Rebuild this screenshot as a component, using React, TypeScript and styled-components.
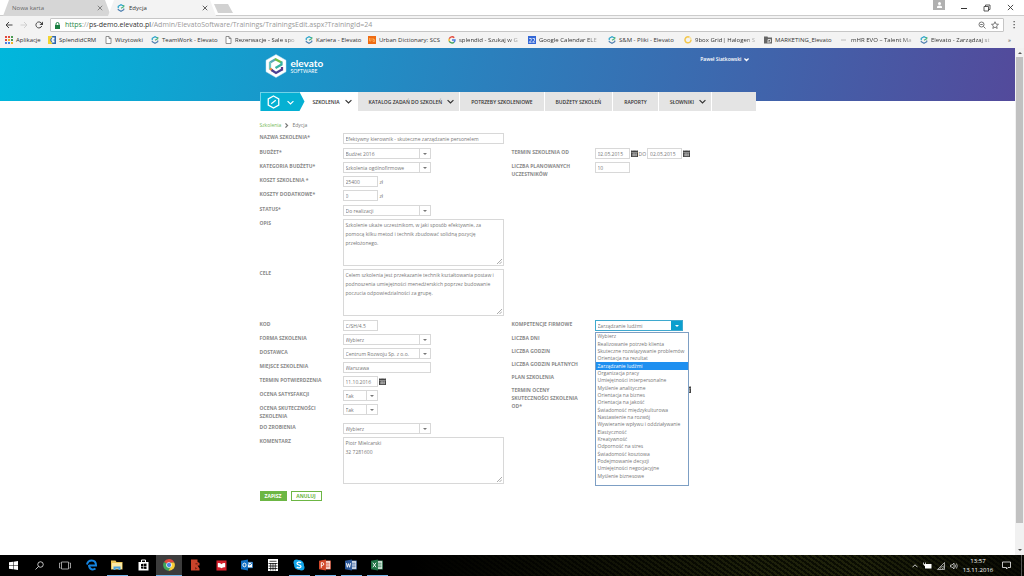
import React, { useId } from "react";
import styled, { createGlobalStyle, css } from "styled-components";

const Global = createGlobalStyle`
  *, *::before, *::after { box-sizing: border-box; }
  body { margin: 0; background: #fff; font-family: "Open Sans", "Noto Sans", sans-serif; font-size: 5px; color: #777; }
  input, select, textarea, button { font: inherit; color: inherit; margin: 0; }
  a { color: inherit; text-decoration: none; }
  ul { list-style: none; margin: 0; padding: 0; }
  svg { display: block; flex: none; }
`;

const Desktop = styled.div`
  min-height: 100vh;
  display: flex;
  flex-direction: column;
`;

/* ---------- browser window ---------- */

const TabStrip = styled.div`
  height: 16px;
  display: flex;
  align-items: flex-end;
  padding-left: 3px;
  background: #fff;
  border-bottom: 1px solid #ccc;
`;

const Tab = styled.div<{ $active?: boolean }>`
  width: 108px;
  height: 16px;
  margin: 0 -3px -1px 0;
  padding: 0 8px 0 9px;
  display: flex;
  align-items: center;
  gap: 4px;
  font-size: 6px;
  color: ${(p) => (p.$active ? "#333" : "#666")};
  background: ${(p) => (p.$active ? "#f3f3f3" : "#d6d6d6")};
  clip-path: polygon(6px 0, calc(100% - 6px) 0, 100% 100%, 0 100%);
`;

const TabTitle = styled.span`
  flex: 1;
  white-space: nowrap;
`;

const PlainButton = styled.button`
  border: 0;
  padding: 0;
  background: none;
  display: flex;
  align-items: center;
  justify-content: center;
  gap: 4px;
`;

const NewTab = styled.button`
  width: 19px;
  height: 9px;
  margin: 0 0 2px 1px;
  border: 0;
  padding: 0;
  background: #d2d2d2;
  clip-path: polygon(0 0, 14px 0, 100% 100%, 4px 100%);
`;

const WindowControls = styled.div`
  align-self: stretch;
  margin-left: auto;
  padding-right: 10px;
  display: flex;
  align-items: center;
  gap: 16px;
  color: #333;
`;

const Profile = styled.span`
  align-self: flex-start;
  width: 12px;
  height: 10px;
  display: flex;
  justify-content: center;
  align-items: center;
  background: #b0b0b0;
`;

const Toolbar = styled.div`
  height: 18px;
  display: flex;
  align-items: center;
  gap: 7px;
  padding: 0 7px 0 5px;
  background: #f3f3f3;
`;

const Omnibox = styled.div`
  flex: 1;
  height: 14px;
  display: flex;
  align-items: center;
  gap: 5px;
  padding: 0 4px;
  border: 1px solid #c6c6c6;
  border-radius: 1px;
  background: #fff;
`;

const Url = styled.span`
  flex: 1;
  font-size: 7px;
  line-height: 10px;
  color: #999;
  white-space: nowrap;
  b { font-weight: 400; color: #333; }
  i { font-style: normal; color: #2b8a4b; }
`;

const Bookmarks = styled.nav`
  height: 14px;
  display: flex;
  align-items: center;
  padding: 0 13px 2px 5px;
  background: #f3f3f3;
  color: #333;
  font-size: 6px;
`;

const Bookmark = styled.a<{ $width: number; $fade?: boolean }>`
  width: ${(p) => p.$width}px;
  display: flex;
  align-items: center;
  gap: 3px;
  white-space: nowrap;
  line-height: 10px;
  ${(p) =>
    p.$fade &&
    css`
      span { mask-image: linear-gradient(90deg, #000 calc(100% - 10px), #0004); }
    `}
`;

const More = styled.span`
  margin-left: auto;
`;

const Viewport = styled.div`
  flex: 1;
  display: flex;
`;

const ScrollBar = styled.div`
  width: 9px;
  display: flex;
  flex-direction: column;
  align-items: center;
  padding: 4px 0;
  color: #555;
  background: #f1f1f1;
`;

const Thumb = styled.div`
  flex: 1;
  width: 7px;
  margin: 3px 0 26px;
  background: #c1c1c1;
`;

/* ---------- site ---------- */

const Page = styled.div`
  flex: 1;
  background: linear-gradient(100deg, #00b7dc 0%, #2b80bd 48%, #534a9b 100%) top / 100% 53px no-repeat #fff;
`;

const Container = styled.div`
  max-width: 496px;
  margin: 0 auto;
`;

const Masthead = styled.header`
  height: 44px;
  padding: 6px 7px 0 5px;
  display: flex;
  align-items: flex-start;
  gap: 4px;
  color: #fff;
`;

const Brand = styled.div`
  flex: 1;
  padding-top: 4px;
  font-family: Lato, sans-serif;
  font-size: 5px;
  line-height: 6px;
  strong { display: block; font-size: 10px; line-height: 10px; }
`;

const UserMenu = styled(PlainButton)`
  font-weight: 600;
  line-height: 10px;
  gap: 2px;
`;

const Nav = styled.nav`
  height: 19px;
  display: flex;
  gap: 1px;
  background: #fff;
`;

const HomeButton = styled.button`
  width: 45px;
  border: 1px solid #6fd3e8;
  border-width: 1px 0 0 1px;
  padding: 0 11px 0 6px;
  display: flex;
  align-items: center;
  justify-content: space-between;
  color: #fff;
  background: #05b0d3;
  clip-path: polygon(0 0, calc(100% - 5px) 0, 100% 50%, calc(100% - 5px) 100%, 0 100%);
`;

const NavItem = styled.a<{ $active?: boolean; $menu?: boolean }>`
  padding: 0 ${(p) => (p.$menu ? 5 : 11)}px 0 ${(p) => (p.$active ? 7 : 11)}px;
  display: flex;
  align-items: center;
  gap: 5px;
  font-weight: 600;
  white-space: nowrap;
  color: #333;
  background: ${(p) => (p.$active ? "#fff" : "#e4e4e4")};
`;

const NavRest = styled.div`
  flex: 1;
  background: #e4e4e4;
`;

const Crumbs = styled.nav`
  display: flex;
  align-items: center;
  gap: 3px;
  padding: 9px 0 3px;
  line-height: 10px;
  a { color: #76b95a; }
`;

const Form = styled.form`
  display: flex;
  flex-direction: column;
  gap: 4px;
`;

const Section = styled.div`
  display: grid;
  grid-template-columns: 252px 1fr;
`;

const Stack = styled.div`
  display: flex;
  flex-direction: column;
  gap: 3px;
`;

const Row = styled.div<{ $bare?: boolean }>`
  min-height: ${(p) => (p.$bare ? 10 : 11)}px;
  display: grid;
  grid-template-columns: 83px 1fr;
  align-items: start;
`;

const Label = styled.label`
  padding-right: 6px;
  font-weight: 700;
  line-height: 8px;
  color: #8a8a8a;
`;

const Controls = styled.div`
  position: relative;
  display: flex;
  align-items: center;
  gap: 1px;
`;

const Unit = styled.span`
  padding-left: 1px;
`;

const sizes = { s: "35px", m: "88px", l: "161px" };
type Size = keyof typeof sizes;

const Input = styled.input<{ $size: Size }>`
  width: ${(p) => sizes[p.$size]};
  height: 11px;
  padding: 0 2px;
  border: 1px solid #d8d8d8;
  background: #fff;
  outline: 0;
`;

const Area = styled.textarea`
  width: ${sizes.l};
  height: 47px;
  display: block;
  padding: 1px 2px;
  border: 1px solid #d8d8d8;
  line-height: 9px;
  resize: none;
  outline: 0;
`;

const AreaBox = styled.div`
  position: relative;
  justify-self: start;
  svg { position: absolute; right: 2px; bottom: 2px; }
`;

const SelectBox = styled.div<{ $size: Size; $open?: boolean }>`
  width: ${(p) => sizes[p.$size]};
  height: 11px;
  display: flex;
  border: 1px solid ${(p) => (p.$open ? "#3fa9cf" : "#d8d8d8")};
  select {
    flex: 1;
    min-width: 0;
    border: 0;
    padding: 0 2px;
    appearance: none;
    background: #fff;
    outline: 0;
  }
`;

const Arrow = styled.span<{ $open?: boolean }>`
  width: 11px;
  display: flex;
  align-items: center;
  justify-content: center;
  color: ${(p) => (p.$open ? "#fff" : "#777")};
  background: ${(p) => (p.$open ? "#0b9fce" : "#fff")};
  border-left: 1px solid ${(p) => (p.$open ? "#0b9fce" : "#d8d8d8")};
`;

const Options = styled.ul`
  position: absolute;
  z-index: 1;
  top: 12px;
  left: 0;
  width: 94px;
  height: 154px;
  padding-bottom: 5px;
  display: flex;
  flex-direction: column;
  border: 1px solid #7d9fc4;
  background: #fff;
`;

const Option = styled.li<{ $selected: boolean }>`
  flex: 1;
  display: flex;
  align-items: center;
  padding-left: 2px;
  white-space: nowrap;
  line-height: 7px;
  color: ${(p) => (p.$selected ? "#fff" : "#777")};
  background: ${(p) => (p.$selected ? "#1e8ff0" : "transparent")};
`;

const PushRight = styled.span`
  margin-left: 89px;
`;

const Actions = styled.div`
  display: flex;
  gap: 4px;
  padding: 3px 0 12px;
`;

const Action = styled.button<{ $primary?: boolean }>`
  width: ${(p) => (p.$primary ? 27 : 31)}px;
  height: 10px;
  padding: 0;
  border: 1px solid #6cb644;
  font-weight: 700;
  line-height: 8px;
  color: ${(p) => (p.$primary ? "#fff" : "#6cb644")};
  background: ${(p) => (p.$primary ? "#6cb644" : "#fff")};
`;

/* ---------- taskbar ---------- */

const Taskbar = styled.footer`
  height: 21px;
  display: flex;
  background:
    linear-gradient(90deg, #000 40%, transparent 75%, transparent 85%, #000a 100%),
    repeating-linear-gradient(35deg, #0b0d03 0 2px, #1e210a 2px 4px);
  color: #fff;
`;

const TaskButton = styled.button<{ $running?: boolean; $current?: boolean }>`
  width: 26px;
  border: 0;
  padding: 0 0 1px;
  display: flex;
  align-items: center;
  justify-content: center;
  background:
    linear-gradient(${(p) => (p.$running ? "#76b9ed, #76b9ed" : "transparent, transparent")}) bottom / ${(p) => (p.$current ? 26 : 21)}px 1px no-repeat
    ${(p) => (p.$current ? "#3c3c3c" : "transparent")};
`;

const Tray = styled.div`
  margin-left: auto;
  padding-right: 2px;
  display: flex;
  align-items: center;
  gap: 5px;
`;

const Clock = styled.time`
  width: 34px;
  padding-right: 4px;
  display: flex;
  flex-direction: column;
  align-items: center;
  font-size: 6px;
  line-height: 9px;
  white-space: nowrap;
`;

const ShowDesktop = styled.span`
  height: 21px;
  margin-left: 5px;
  border-left: 1px solid #555;
`;

/* ---------- drawings ---------- */

const Chevron = ({ size = 6, dir = "down", width = 2 }: { size?: number; dir?: "down" | "up" | "right"; width?: number }) => (
  <svg width={size} height={size} viewBox="0 0 12 12" fill="none" stroke="currentColor" strokeWidth={width}>
    <path d={dir === "down" ? "M1 3.5l5 5 5-5" : dir === "up" ? "M1 8.5l5-5 5 5" : "M3.5 1l5 5-5 5"} />
  </svg>
);

const Caret = ({ up }: { up?: boolean }) => (
  <svg width="4" height="2" viewBox="0 0 4 2" fill="currentColor">
    <path d={up ? "M0 2h4L2 0z" : "M0 0h4L2 2z"} />
  </svg>
);

const Close = ({ size }: { size: number }) => (
  <svg width={size} height={size} viewBox="0 0 8 8" stroke="currentColor" strokeWidth="1">
    <path d="M1 1l6 6M7 1L1 7" />
  </svg>
);

const Calendar = () => (
  <svg width="7" height="7" viewBox="0 0 14 14">
    <path fill="#444" d="M0 1h14v13H0z" />
    <path stroke="#ddd" strokeWidth="1" d="M1 5h12M2 8.500h10M2 11.500h10M4.500 6v6M7.500 6v6M10.500 6v6M3.500 0v2M10.500 0v2" />
  </svg>
);

const Swirl = () => (
  <svg width="8" height="8" viewBox="0 0 16 16" fill="none" strokeWidth="2.4">
    <path stroke="#29a3c9" d="M13 4L8 1.5 2.5 4.5v4" />
    <path stroke="#4f7fb0" d="M2.5 10v1.5L8 14.5l5.5-3V9" />
    <path stroke="#4cb67a" d="M8 8.5l5.5-3.2V2" />
  </svg>
);

const FileIcon = () => (
  <svg width="7" height="8" viewBox="0 0 14 16" fill="#fff" stroke="#777" strokeWidth="1.6">
    <path d="M2 1h6l4 4v10H2zM8 1v4h4" />
  </svg>
);

const icons: Record<string, React.ReactNode> = {
  apps: (
    <svg width="8" height="8" viewBox="0 0 8 8">
      {["#e2483c", "#e2483c", "#4b9b52", "#e2483c", "#f0b429", "#4b9b52", "#4a7de0", "#4a7de0", "#f0b429"].map((c, i) => (
        <rect key={i} x={(i % 3) * 3} y={Math.floor(i / 3) * 3} width="2" height="2" fill={c} />
      ))}
    </svg>
  ),
  crm: (
    <svg width="8" height="8" viewBox="0 0 16 16">
      <path fill="#2f66ad" d="M0 0h16v16H0z" />
      <path fill="#f2d433" d="M0 0h9l-5 8 5 8H0z" />
      <path fill="#fff" d="M6 3h7v4l-4 1 4 1v4H6l3-3-4-2 4-2z" />
    </svg>
  ),
  file: <FileIcon />,
  swirl: <Swirl />,
  urban: (
    <svg width="8" height="8" viewBox="0 0 16 16">
      <path fill="#ef6b12" d="M0 0h16v16H0z" />
      <path fill="none" stroke="#ffb25c" strokeWidth="1.6" d="M3 4v6h3V4M10 4v7h3V7h-3" />
    </svg>
  ),
  google: (
    <svg width="8" height="8" viewBox="0 0 16 16" fill="none" strokeWidth="2.8">
      <path stroke="#e2483c" d="M12.5 3.5A6 6 0 0 0 2.6 5.5" />
      <path stroke="#f0b429" d="M2.6 5.5a6 6 0 0 0 0 5" />
      <path stroke="#3fa15a" d="M2.6 10.5a6 6 0 0 0 9.4 2" />
      <path stroke="#4a7de0" d="M12 12.5A6 6 0 0 0 14 8H8" />
    </svg>
  ),
  gcal: (
    <svg width="8" height="8" viewBox="0 0 16 16">
      <path fill="#3367d6" d="M0 0h16v16H0z" />
      <path fill="none" stroke="#fff" strokeWidth="1.5" d="M2.500 5h4v3.500l-4 4h4.500M9 5h4v3.500l-4 4h4.500" />
    </svg>
  ),
  ring: (
    <svg width="8" height="8" viewBox="0 0 16 16" fill="none" stroke="#f3c74d" strokeWidth="3">
      <path d="M11 2.5A6 6 0 1 0 14 8" />
      <path stroke="#f8e2a0" d="M11 2.5A6 6 0 0 1 14 8" />
    </svg>
  ),
  folder: (
    <svg width="8" height="8" viewBox="0 0 16 16">
      <path fill="#666" d="M0 1h7l1 2h8v12H0z" />
      <path fill="none" stroke="#fff" strokeWidth="1.5" d="M8 14V7h5v5H9" />
    </svg>
  ),
  dash: (
    <svg width="8" height="8" viewBox="0 0 8 8" stroke="#bbb">
      <path d="M1 4h5" />
    </svg>
  ),
};

const Hexagon = () => (
  <svg width="22" height="24" viewBox="0 0 44 48">
    <path fill="#fff" stroke="#bfe1f0" strokeWidth="1" d="M22 1l20 11.5v23L22 47 2 35.500v-23z" />
    <g fill="none" strokeWidth="4.500">
      <path stroke="#5aa9b8" d="M10 17l12-7" />
      <path stroke="#72bf44" d="M20 10l13 7" />
      <path stroke="#36b2a3" d="M33 15v6l-12 7" />
      <path stroke="#6fc7c0" d="M10 16v15" />
      <path stroke="#e58a3c" d="M10 29l5 4" />
      <path stroke="#4a3f92" d="M13 32l9 6 12-7" />
      <path stroke="#5b3a86" d="M34 33v-7" />
    </g>
  </svg>
);

const HomeHex = () => (
  <svg width="13" height="14" viewBox="0 0 26 28" fill="none" stroke="#fff" strokeWidth="2.6">
    <path d="M13 2l10.500 6v12L13 26 2.500 20V8z" />
    <path d="M8.500 17.500l9-7" strokeWidth="2.400" />
  </svg>
);

const office = (color: string, mark: string) => (
  <svg width="12" height="12" viewBox="0 0 26 24">
    <path fill="#fff" stroke={color} strokeWidth="1.5" d="M12 3h13v18H12z" />
    <path stroke={color} strokeWidth="2" d="M15 8h8M15 12h8M15 16h8" />
    <path fill={color} d="M0 3l15-3v24L0 21z" />
    <path fill="none" stroke="#fff" strokeWidth="2" d={mark} />
  </svg>
);

const tasks: { name: string; running?: boolean; current?: boolean; icon: React.ReactNode }[] = [
  { name: "Start", icon: <svg width="9" height="9" viewBox="0 0 18 18" fill="#fff"><path d="M0 2.500L8 1.500V8.500H0zM9 1.300L18 0v8.500H9zM0 9.500h8v7L0 15.500zM9 9.500h9V18l-9-1.300z" /></svg> },
  { name: "Szukaj", icon: <svg width="9" height="9" viewBox="0 0 18 18" fill="none" stroke="#fff" strokeWidth="1.500"><circle cx="11" cy="7" r="5.500" /><path d="M7 11l-6 6" /></svg> },
  { name: "Widok zadań", icon: <svg width="12" height="9" viewBox="0 0 24 18" fill="none" stroke="#ccc" strokeWidth="1.500"><path d="M5 2h14v14H5zM3 4H1v10h2M21 4h2v10h-2" /></svg> },
  { name: "Edge", icon: <svg width="11" height="12" viewBox="0 0 22 24" fill="none" stroke="#1584e0" strokeWidth="4"><path d="M6 13h14c0-7-4-10-8.500-10S3 6 2 11M6 12c0 10 9 10 13 7" /></svg> },
  { name: "Eksplorator", running: true, icon: <svg width="12" height="10" viewBox="0 0 24 20"><path fill="#e9c455" d="M0 1h9l2 3h12v15H0z" /><path fill="#fae9a5" d="M2 6h20v12H2z" /><path fill="#4ba3dc" d="M5 13h14v7h-4v-3H9v3H5z" /></svg> },
  { name: "Sklep", icon: <svg width="11" height="12" viewBox="0 0 22 24"><path fill="none" stroke="#fff" strokeWidth="2" d="M7 7V2h8v5" /><path fill="#fff" d="M1 6h20v17H1z" /><path fill="#000" d="M6 10l4.500-.5V14H6zM11.500 9.400L17 9v5h-5.500zM6 15h4.500v4.500L6 19zM11.500 15H17v5l-5.500-.5z" /></svg> },
  { name: "Chrome", running: true, current: true, icon: <svg width="12" height="12" viewBox="0 0 24 24"><path fill="#e2483c" d="M12 12L2 6a11.500 11.500 0 0 1 20.500 1H12z" /><path fill="#f7cd38" d="M12 12l4.500-5h6A11.500 11.500 0 0 1 11 23.500z" /><path fill="#3fa65a" d="M12 12l4 3-5 8.500A11.500 11.500 0 0 1 2 6z" /><circle cx="12" cy="12" r="5.500" fill="#fff" /><circle cx="12" cy="12" r="4.300" fill="#4a84e8" /></svg> },
  { name: "Terminarz", icon: <svg width="11" height="12" viewBox="0 0 22 24"><path fill="#c8432b" d="M2 1h13v5l4 2v5h-4l4 6v4H2z" /><path fill="#7d2416" d="M11 8h4v3h-4zM10 16l5 3-5 2z" /></svg> },
  { name: "Czytnik", icon: <svg width="11" height="11" viewBox="0 0 24 22"><path fill="#d31f2b" d="M1 0h22v22H1z" /><path fill="#fff" d="M4 6c3-1 6 0 8 2 2-2 5-3 8-2v9c-3-1-5 0-8 2-3-2-5-3-8-2z" /></svg> },
  { name: "Outlook", icon: <svg width="12" height="12" viewBox="0 0 26 24"><path fill="#fff" stroke="#0f6fc5" strokeWidth="1.500" d="M12 6h13v12H12z" /><path fill="none" stroke="#0f6fc5" strokeWidth="2" d="M13 7l6 5 6-5" /><path fill="#0f6fc5" d="M0 3l15-3v24L0 21z" /><ellipse cx="7.500" cy="12" rx="3.500" ry="4" fill="none" stroke="#fff" strokeWidth="2" /></svg> },
  { name: "Kalkulator", icon: <svg width="10" height="12" viewBox="0 0 20 24"><path fill="#fff" d="M0 0h20v24H0z" /><path stroke="#000" strokeWidth="1.500" d="M3 4.500h14M1 9h18M1 14h18M1 19h18M5.500 8v15M10 8v15M14.500 8v15" /></svg> },
  { name: "Skype", running: true, icon: <svg width="12" height="12" viewBox="0 0 24 24"><circle cx="12" cy="12" r="10" fill="#12a5e8" /><circle cx="7" cy="7" r="6" fill="#12a5e8" /><circle cx="17" cy="17" r="6" fill="#12a5e8" /><path fill="none" stroke="#fff" strokeWidth="2.500" d="M16 8c-2-3-8-2-8 1 0 4 8 2 8 6 0 3-6 4-8.500 1" /></svg> },
  { name: "PowerPoint", running: true, icon: office("#d2472a", "M5 18V7h3c3 0 3 6 0 6H5") },
  { name: "Word", running: true, icon: office("#2a5699", "M3 8l2 9 2.500-8L10 17l2-9") },
  { name: "Excel", running: true, icon: office("#1f7244", "M4 7l7 10M11 7L4 17") },
];

/* ---------- form parts ---------- */

const Select = ({ id, value, size, open }: { id: string; value: string; size: Size; open?: boolean }) => (
  <SelectBox $size={size} $open={open}>
    <select id={id} defaultValue={value}>
      <option>{value}</option>
    </select>
    <Arrow $open={open}>
      <Caret />
    </Arrow>
  </SelectBox>
);

const InputRow = ({ label, value, size = "s", unit }: { label: string; value: string; size?: Size; unit?: string }) => {
  const id = useId();
  return (
    <Row>
      <Label htmlFor={id}>{label}</Label>
      <Controls>
        <Input id={id} $size={size} defaultValue={value} />
        {unit && <Unit>{unit}</Unit>}
      </Controls>
    </Row>
  );
};

const SelectRow = ({ label, value, size = "m" }: { label: string; value: string; size?: Size }) => {
  const id = useId();
  return (
    <Row>
      <Label htmlFor={id}>{label}</Label>
      <Controls>
        <Select id={id} value={value} size={size} />
      </Controls>
    </Row>
  );
};

const AreaRow = ({ label, value }: { label: string; value: string }) => {
  const id = useId();
  return (
    <Row>
      <Label htmlFor={id}>{label}</Label>
      <AreaBox>
        <Area id={id} defaultValue={value} />
        <svg width="5" height="5" viewBox="0 0 5 5" stroke="#888" strokeWidth="0.700">
          <path d="M0 5l5-5M2.500 5L5 2.500" />
        </svg>
      </AreaBox>
    </Row>
  );
};

const competences = [
  "Wybierz", "Realizowanie potrzeb klienta", "Skuteczne rozwiązywanie problemów", "Orientacja na rezultat",
  "Zarządzanie ludźmi", "Organizacja pracy", "Umiejętności interpersonalne", "Myślenie analityczne",
  "Orientacja na biznes", "Orientacja na jakość", "Świadomość międzykulturowa", "Nastawienie na rozwój",
  "Wywieranie wpływu i oddziaływanie", "Elastyczność", "Kreatywność", "Odporność na stres",
  "Świadomość kosztowa", "Podejmowanie decyzji", "Umiejętności negocjacyjne", "Myślenie biznesowe",
];

const bookmarks: [string, string, number, boolean?][] = [
  ["apps", "Aplikacje", 43],
  ["crm", "SplendidCRM", 57],
  ["file", "Wizytowki", 46],
  ["swirl", "TeamWork - Elevato", 74],
  ["file", "Rezerwacje - Sale spo", 80, true],
  ["swirl", "Kariera - Elevato", 63],
  ["urban", "Urban Dictionary: SCS", 80],
  ["google", "splendid - Szukaj w G", 80, true],
  ["gcal", "Google Calendar ELE", 80, true],
  ["swirl", "S&M - Pliki - Elevato", 76],
  ["ring", "9box Grid| Halogen S", 80, true],
  ["folder", "MARKETING_Elevato", 76],
  ["dash", "mHR EVO – Talent Ma", 80, true],
  ["swirl", "Elevato - Zarządzaj st", 80, true],
];

export default function App() {
  return (
    <Desktop>
      <Global />
      <TabStrip>
        <Tab>
          <TabTitle>Nowa karta</TabTitle>
          <PlainButton aria-label="Zamknij kartę"><Close size={6} /></PlainButton>
        </Tab>
        <Tab $active>
          <Swirl />
          <TabTitle>Edycja</TabTitle>
          <PlainButton aria-label="Zamknij kartę"><Close size={6} /></PlainButton>
        </Tab>
        <NewTab aria-label="Nowa karta" />
        <WindowControls>
          <Profile>
            <svg width="5" height="6" viewBox="0 0 10 12" fill="#fff"><circle cx="5" cy="3" r="3" /><path d="M0 12V9q5-4 10 0v3z" /></svg>
          </Profile>
          <PlainButton aria-label="Minimalizuj"><svg width="6" height="8" viewBox="0 0 6 8" stroke="#333"><path d="M0 4.500h6" /></svg></PlainButton>
          <PlainButton aria-label="Przywróć"><svg width="8" height="8" viewBox="0 0 16 16" fill="none" stroke="#333" strokeWidth="1.600"><path d="M2 5h9v9H2zM5 5V2h9v9h-3" /></svg></PlainButton>
          <PlainButton aria-label="Zamknij"><Close size={7} /></PlainButton>
        </WindowControls>
      </TabStrip>
      <Toolbar>
        <PlainButton aria-label="Wstecz"><svg width="8" height="8" viewBox="0 0 16 16" fill="none" stroke="#444" strokeWidth="2"><path d="M15 8H2M8 2L2 8l6 6" /></svg></PlainButton>
        <PlainButton aria-label="Dalej"><svg width="8" height="8" viewBox="0 0 16 16" fill="none" stroke="#d0d0d0" strokeWidth="2"><path d="M1 8h13M8 2l6 6-6 6" /></svg></PlainButton>
        <PlainButton aria-label="Odśwież"><svg width="8" height="8" viewBox="0 0 16 16" fill="none" stroke="#444" strokeWidth="2"><path d="M13.500 10A6 6 0 1 1 12 3.500L14 6" /><path fill="#444" stroke="none" d="M16 1v7H9z" /></svg></PlainButton>
        <Omnibox>
          <svg width="5" height="7" viewBox="0 0 10 14"><path fill="#1b8043" d="M0 6h10v8H0z" /><path fill="none" stroke="#1b8043" strokeWidth="2" d="M2 7V4a3 3 0 0 1 6 0v3" /></svg>
          <Url><i>https</i>://<b>ps-demo.elevato.pl</b>/Admin/ElevatoSoftware/Trainings/TrainingsEdit.aspx?TrainingId=24</Url>
          <svg width="8" height="8" viewBox="0 0 16 16" fill="none" stroke="#555" strokeWidth="1.600"><circle cx="7" cy="7" r="5" /><path d="M4.500 7h5M11 11l4 4" /></svg>
          <svg width="8" height="8" viewBox="0 0 16 16" fill="none" stroke="#555" strokeWidth="1.500"><path d="M8 1.500l2 4.700 5 .4-3.800 3.300 1.200 5L8 12.200l-4.400 2.700 1.200-5L1 6.600l5-.4z" /></svg>
        </Omnibox>
        <PlainButton aria-label="Menu"><svg width="6" height="8" viewBox="0 0 6 8" fill="#555"><path d="M2.500 0h1.300v1.300H2.500zM2.500 3h1.300v1.300H2.500zM2.500 6h1.300v1.300H2.500z" /></svg></PlainButton>
      </Toolbar>
      <Bookmarks>
        {bookmarks.map(([icon, text, width, fade]) => (
          <Bookmark key={text} href="#" $width={width} $fade={fade}>
            {icons[icon]}
            <span>{text}</span>
          </Bookmark>
        ))}
        <More>»</More>
      </Bookmarks>
      <Viewport>
        <Page>
          <Container>
            <Masthead>
              <Hexagon />
              <Brand><strong>elevato</strong>SOFTWARE</Brand>
              <UserMenu>Paweł Siatkowski <Chevron size={5} width={3} /></UserMenu>
            </Masthead>
            <Nav>
              <HomeButton aria-label="Moduły"><HomeHex /><Chevron size={7} /></HomeButton>
              <NavItem href="#" $active $menu>SZKOLENIA <Chevron size={7} /></NavItem>
              <NavItem href="#" $menu>KATALOG ZADAŃ DO SZKOLEŃ <Chevron size={7} /></NavItem>
              <NavItem href="#">POTRZEBY SZKOLENIOWE</NavItem>
              <NavItem href="#">BUDŻETY SZKOLEŃ</NavItem>
              <NavItem href="#">RAPORTY</NavItem>
              <NavItem href="#" $menu>SŁOWNIKI <Chevron size={7} /></NavItem>
              <NavRest />
            </Nav>
            <Crumbs>
              <a href="#">Szkolenia</a>
              <Chevron size={5} dir="right" width={3} />
              <span>Edycja</span>
            </Crumbs>
            <Form onSubmit={(e) => e.preventDefault()}>
              <Section>
                <Stack>
                  <InputRow label="NAZWA SZKOLENIA*" value="Efektywny kierownik - skuteczne zarządzanie personelem" size="l" />
                </Stack>
              </Section>
              <Section>
                <Stack>
                  <SelectRow label="BUDŻET*" value="Budżet 2016" />
                  <SelectRow label="KATEGORIA BUDŻETU*" value="Szkolenia ogólnofirmowe" />
                  <InputRow label="KOSZT SZKOLENIA *" value="25400" unit="zł" />
                  <InputRow label="KOSZTY DODATKOWE*" value="0" unit="zł" />
                </Stack>
                <Stack>
                  <Row>
                    <Label htmlFor="from">TERMIN SZKOLENIA OD</Label>
                    <Controls>
                      <Input id="from" $size="s" defaultValue="02.05.2015" />
                      <Calendar />
                      <label htmlFor="to">DO</label>
                      <Input id="to" $size="s" defaultValue="02.05.2015" />
                      <Calendar />
                    </Controls>
                  </Row>
                  <InputRow label="LICZBA PLANOWANYCH UCZESTNIKÓW" value="10" />
                </Stack>
              </Section>
              <Section>
                <Stack>
                  <SelectRow label="STATUS*" value="Do realizacji" />
                  <AreaRow label="OPIS" value="Szkolenie ukaże uczestnikom, w jaki sposób efektywnie, za pomocą kilku metod i technik zbudować solidną pozycję przełożonego." />
                  <AreaRow label="CELE" value="Celem szkolenia jest przekazanie technik kształtowania postaw i podnoszenia umiejętności menedżerskich poprzez budowanie poczucia odpowiedzialności za grupę." />
                </Stack>
              </Section>
              <Section>
                <Stack>
                  <InputRow label="KOD" value="C/SH/4.5" />
                  <SelectRow label="FORMA SZKOLENIA" value="Wybierz" />
                  <SelectRow label="DOSTAWCA" value="Centrum Rozwoju Sp. z o.o." />
                  <InputRow label="MIEJSCE SZKOLENIA" value="Warszawa" size="m" />
                  <Row>
                    <Label htmlFor="confirm">TERMIN POTWIERDZENIA</Label>
                    <Controls>
                      <Input id="confirm" $size="s" defaultValue="11.10.2016" />
                      <Calendar />
                    </Controls>
                  </Row>
                  <SelectRow label="OCENA SATYSFAKCJI" value="Tak" size="s" />
                  <SelectRow label="OCENA SKUTECZNOŚCI SZKOLENIA" value="Tak" size="s" />
                  <SelectRow label="DO ZROBIENIA" value="Wybierz" />
                  <AreaRow label="KOMENTARZ" value={"Piotr Mielcarski\n32 7281600"} />
                </Stack>
                <Stack>
                  <Row>
                    <Label htmlFor="competence">KOMPETENCJE FIRMOWE</Label>
                    <Controls>
                      <Select id="competence" value="Zarządzanie ludźmi" size="m" open />
                      <Options role="listbox" aria-label="Kompetencje firmowe">
                        {competences.map((name) => (
                          <Option key={name} role="option" aria-selected={name === "Zarządzanie ludźmi"} $selected={name === "Zarządzanie ludźmi"}>
                            {name}
                          </Option>
                        ))}
                      </Options>
                    </Controls>
                  </Row>
                  <Row $bare><Label as="span">LICZBA DNI</Label></Row>
                  <Row $bare><Label as="span">LICZBA GODZIN</Label></Row>
                  <Row $bare><Label as="span">LICZBA GODZIN PŁATNYCH</Label></Row>
                  <Row $bare><Label as="span">PLAN SZKOLENIA</Label></Row>
                  <Row $bare>
                    <Label as="span">TERMIN OCENY<br />SKUTECZNOŚCI SZKOLENIA OD*</Label>
                    <PushRight><Calendar /></PushRight>
                  </Row>
                </Stack>
              </Section>
              <Actions>
                <Action type="submit" $primary>ZAPISZ</Action>
                <Action type="button">ANULUJ</Action>
              </Actions>
            </Form>
          </Container>
        </Page>
        <ScrollBar>
          <Caret up />
          <Thumb />
          <Caret />
        </ScrollBar>
      </Viewport>
      <Taskbar>
        {tasks.map((t) => (
          <TaskButton key={t.name} aria-label={t.name} $running={t.running} $current={t.current}>
            {t.icon}
          </TaskButton>
        ))}
        <Tray>
          <Chevron size={6} dir="up" width={1.6} />
          <svg width="9" height="7" viewBox="0 0 18 14"><path fill="#fff" d="M4 4h13v9H4z" /><path fill="none" stroke="#fff" strokeWidth="1.500" d="M1 1v4h4V1M3 5v3" /></svg>
          <svg width="8" height="8" viewBox="0 0 16 16" fill="none" stroke="#ccc" strokeWidth="1.500"><path d="M1 15L15 1v14zM6 15q0-6 9-7M10 15q0-3 5-4" /></svg>
          <svg width="8" height="8" viewBox="0 0 16 16" fill="none" stroke="#ddd" strokeWidth="1.500"><path d="M1 6h3l4-4v12L4 10H1zM10 5q2 3 0 6M13 3q3 5 0 10" /></svg>
          <Clock><span>13:57</span><span>13.11.2016</span></Clock>
          <svg width="9" height="9" viewBox="0 0 18 18" fill="none" stroke="#fff" strokeWidth="1.500"><path d="M1 2h16v11h-5l-3 3v-3H1z" /></svg>
          <ShowDesktop />
        </Tray>
      </Taskbar>
    </Desktop>
  );
}
